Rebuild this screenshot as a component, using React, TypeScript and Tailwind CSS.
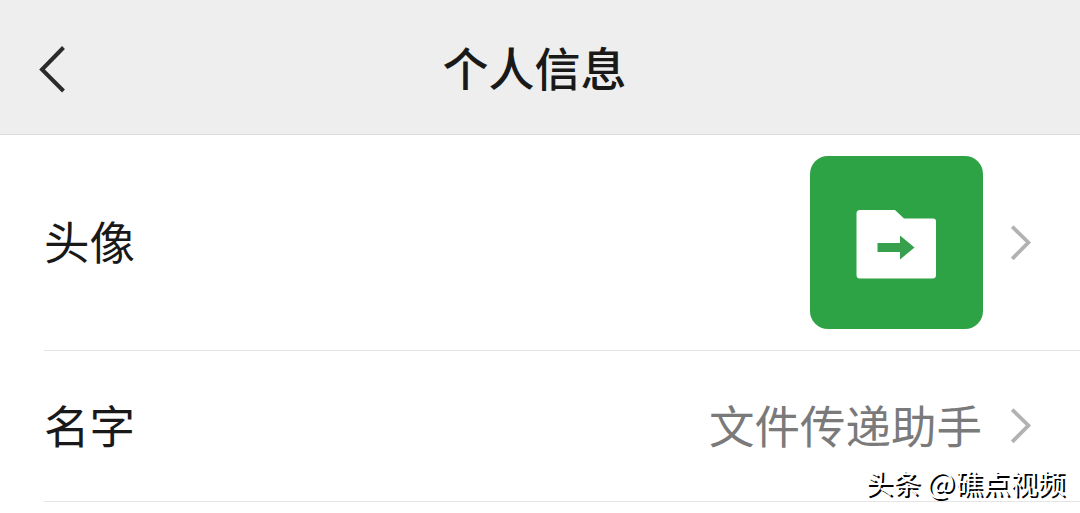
import type { ReactNode } from 'react';

type InfoRowProps = {
  label: string;
  className: string;
  children: ReactNode;
};

const ArrowRight = () => (
  <svg className="ml-[27px] h-9 w-6 shrink-0" viewBox="0 0 24 36" fill="none">
    <path d="M2.2 1.7 18.4 17.5 2.2 33.8" stroke="#b2b2b2" strokeWidth="3.8" />
  </svg>
);

const FileTransferAvatar = () => (
  <div className="h-[173px] w-[173px] shrink-0 rounded-[18px] bg-[#2ea346]">
    <svg className="h-full w-full" viewBox="0 0 173 173">
      <path
        d="M50 54H85L94 62.5H123Q126 62.5 126 65.5V119Q126 122.5 122.500 122.5H50Q46.5 122.5 46.5 119V57.500Q46.5 54 50 54Z"
        fill="#fff"
      />
      <path d="M67.500 87H90V79.500L104.500 91.500 90 103.500V96H67.500Z" fill="#37a04d" />
    </svg>
  </div>
);

const InfoRow = ({ label, className, children }: InfoRowProps) => (
  <li className={`ml-11 flex items-center justify-between border-b border-[#e5e5e5] pr-[46px] ${className}`}>
    <span className="mb-[3px] text-[45.5px] leading-none text-[#191919]">{label}</span>
    <div className="flex items-center">
      {children}
      <ArrowRight />
    </div>
  </li>
);

/**
 * 个人信息页面
 */
const App = () => {
  return (
    <main className="relative h-[513px] w-full overflow-hidden bg-white font-['Noto_Sans_CJK_SC',sans-serif]">
      <header className="grid h-[135px] grid-cols-[1fr_auto_1fr] items-center border-b border-[#dcdcdc] bg-[#eeeeee] pr-[11px]">
        <button type="button" aria-label="返回" className="ml-[38px] mt-1 h-12 w-8">
          <svg className="h-12 w-8" viewBox="0 0 32 48" fill="none">
            <path d="M25.5 2.5 4 24.5 25.5 46" stroke="#2b2b2b" strokeWidth="4" />
          </svg>
        </button>
        <h1 className="mb-0.5 text-[46px] leading-none font-medium text-[#191919]">个人信息</h1>
      </header>

      <ul>
        <InfoRow label="头像" className="h-[216px]">
          <FileTransferAvatar />
        </InfoRow>
        <InfoRow label="名字" className="h-[151px]">
          <span className="mr-px mb-[3px] text-[45.5px] leading-none text-[#7a7a7a]">文件传递助手</span>
        </InfoRow>
      </ul>

      <p className="absolute right-[15px] bottom-[17px] text-[27.5px] leading-none whitespace-nowrap text-white [text-shadow:2px_2px_0_#000]">
        头条 <span className="text-[30px]">@</span>礁点视频
      </p>
    </main>
  );
};

export default App;
